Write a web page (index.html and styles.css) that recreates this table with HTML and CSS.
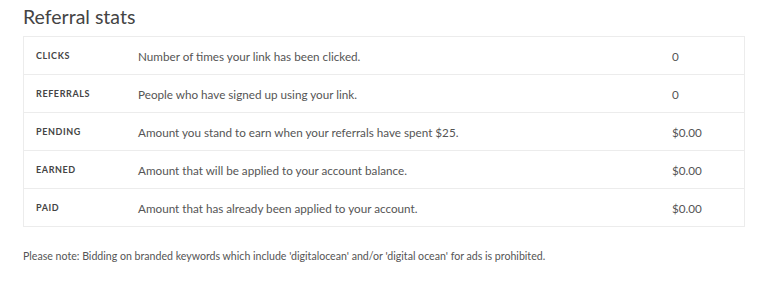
FILE: index.html
```html
<!DOCTYPE html>
<html lang="en">

<head>
    <meta charset="UTF-8">
    <meta name="viewport" content="width=device-width, initial-scale=1.0">
    <title>Referral stats</title>

    <link rel="stylesheet" href="styles.css">
</head>

<body>
    <div class="container">
        <h2 class="title">Referral stats</h2>
        <table class="stats">
            <tr>
                <th>Clicks</th>
                <td>Number of times your link has been clicked.</td>
                <td class="value">0</td>
            </tr>
            <tr>
                <th>Referrals</th>
                <td>People who have signed up using your link.</td>
                <td class="value">0</td>
            </tr>
            <tr>
                <th>Pending</th>
                <td>Amount you stand to earn when your referrals have spent $25.</td>
                <td class="value">$0.00</td>
            </tr>
            <tr>
                <th>Earned</th>
                <td>Amount that will be applied to your account balance.</td>
                <td class="value">$0.00</td>
            </tr>
            <tr>
                <th>Paid</th>
                <td>Amount that has already been applied to your account.</td>
                <td class="value">$0.00</td>
            </tr>
        </table>
        <p class="note">Please note: Bidding on branded keywords which include 'digitalocean' and/or 'digital ocean' for ads is prohibited.</p>
    </div>
</body>
</html>
```

FILE: styles.css
```css
body {
    margin: 0;
    background: #fff;
    font-family: Lato, "Open Sans", sans-serif;
    color: #555;
}

.container {
    padding: 0 23px;
}

.title {
    margin: 0;
    padding-top: 5px;
    height: 31px;
    font-size: 19.5px;
    font-weight: 400;
    color: #444;
}

.stats {
    width: 722px;
    border-collapse: collapse;
    border: 1px solid #ececec;
}

.stats tr {
    height: 38px;
    border-top: 1px solid #ececec;
}

.stats th {
    width: 102px;
    padding: 0 0 0 12px;
    text-align: left;
    font-size: 9px;
    font-weight: 700;
    letter-spacing: 0.6px;
    text-transform: uppercase;
    color: #444;
}

.stats td {
    padding: 0;
    font-size: 11.7px;
}

.stats .value {
    width: 72px;
}

.note {
    margin: 23px 0 0;
    font-size: 10.6px;
    color: #555;
}
```
